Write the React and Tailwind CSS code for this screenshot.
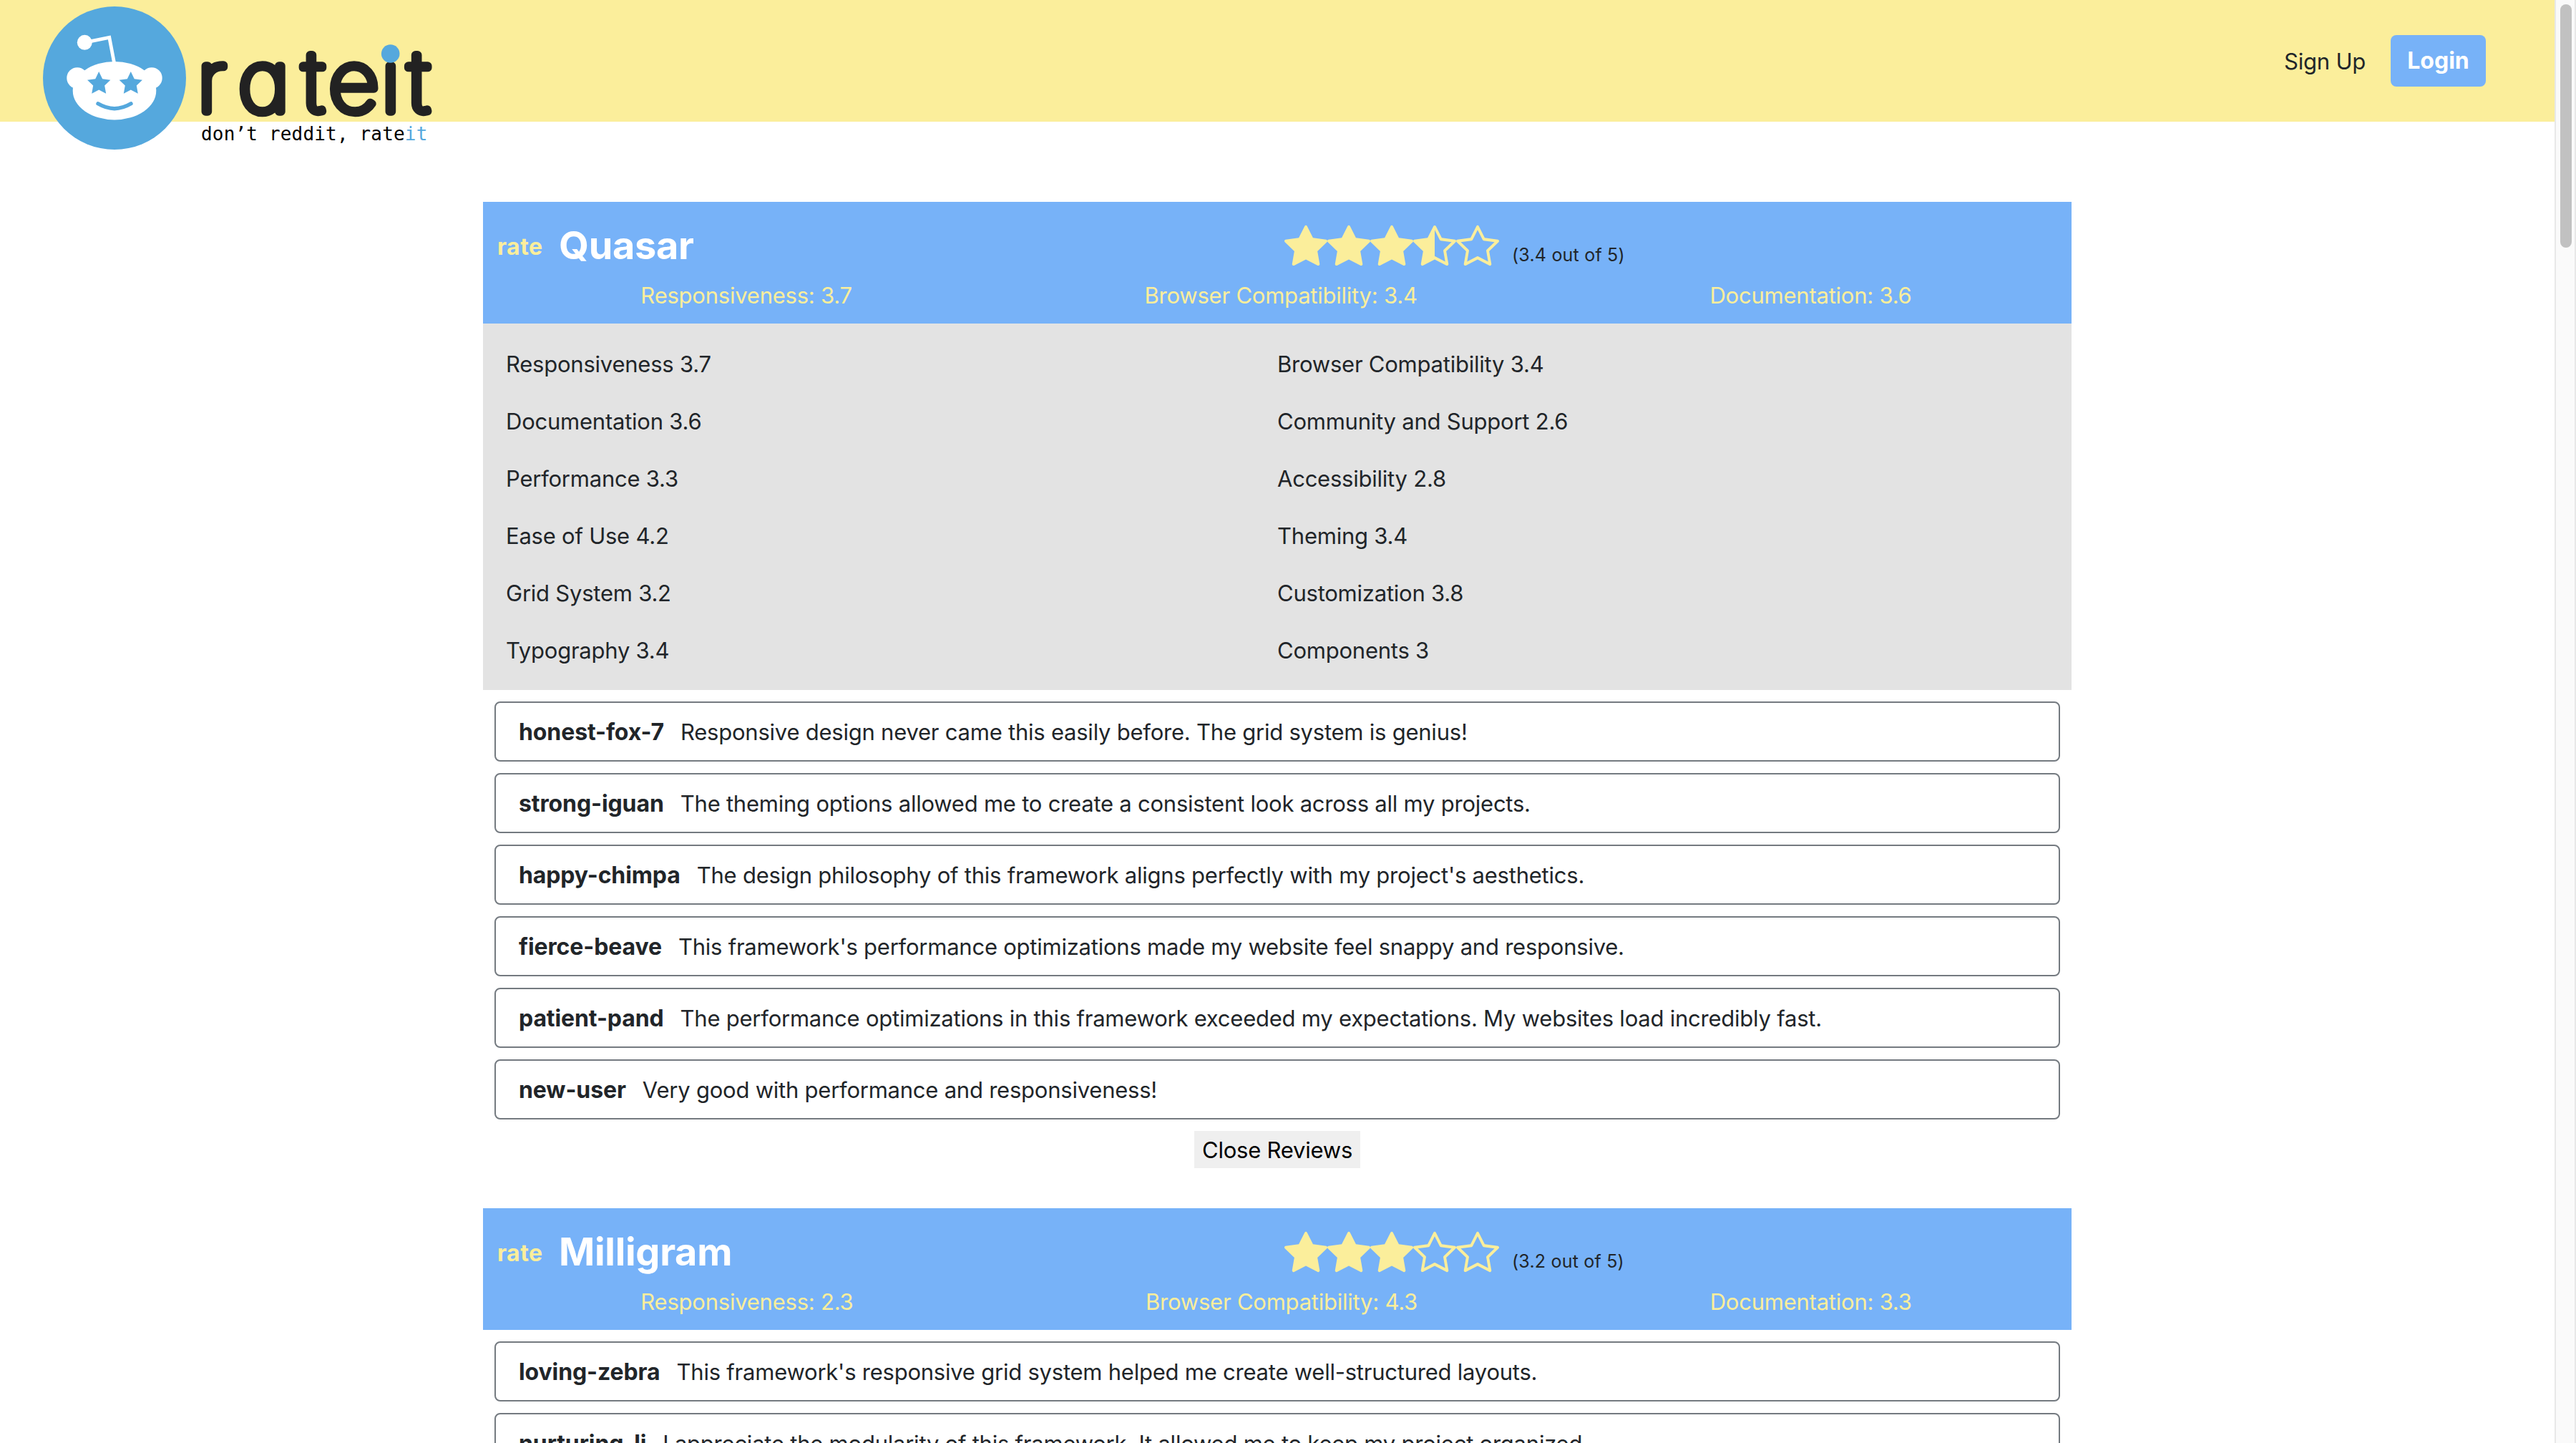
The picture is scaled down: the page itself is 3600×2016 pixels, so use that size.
import React from 'react'
import { BsStar, BsStarFill, BsStarHalf } from 'react-icons/bs'

const frameworks = [
  {
    name: 'Quasar',
    rating: '3.4',
    stars: ['full', 'full', 'full', 'half', 'empty'],
    summary: ['Responsiveness: 3.7', 'Browser Compatibility: 3.4', 'Documentation: 3.6'],
    details: [
      'Responsiveness 3.7', 'Browser Compatibility 3.4',
      'Documentation 3.6', 'Community and Support 2.6',
      'Performance 3.3', 'Accessibility 2.8',
      'Ease of Use 4.2', 'Theming 3.4',
      'Grid System 3.2', 'Customization 3.8',
      'Typography 3.4', 'Components 3',
    ],
    reviews: [
      ['honest-fox-7', 'Responsive design never came this easily before. The grid system is genius!'],
      ['strong-iguan', 'The theming options allowed me to create a consistent look across all my projects.'],
      ['happy-chimpa', "The design philosophy of this framework aligns perfectly with my project's aesthetics."],
      ['fierce-beave', "This framework's performance optimizations made my website feel snappy and responsive."],
      ['patient-pand', 'The performance optimizations in this framework exceeded my expectations. My websites load incredibly fast.'],
      ['new-user', 'Very good with performance and responsiveness!'],
    ],
  },
  {
    name: 'Milligram',
    rating: '3.2',
    stars: ['full', 'full', 'full', 'empty', 'empty'],
    summary: ['Responsiveness: 2.3', 'Browser Compatibility: 4.3', 'Documentation: 3.3'],
    details: [],
    reviews: [
      ['loving-zebra', "This framework's responsive grid system helped me create well-structured layouts."],
      ['nurturing-li', 'I appreciate the modularity of this framework. It allowed me to keep my project organized.'],
    ],
  },
]

const starIcons = { full: BsStarFill, half: BsStarHalf, empty: BsStar }

function starPoints(cx, cy) {
  return Array.from({ length: 10 }, (_, i) => {
    const r = i % 2 ? 8.4 : 17
    const a = (Math.PI / 5) * i
    return `${(cx + r * Math.sin(a)).toFixed(2)},${(cy - r * Math.cos(a)).toFixed(2)}`
  }).join(' ')
}

function Logo() {
  return (
    <svg className="h-[214px] w-[620px] shrink-0" viewBox="0 0 620 214" role="img" aria-label="rateit">
      <circle cx="160" cy="109" r="100" fill="#55a8dd" />
      <polyline points="118.3,59.3 152.8,52.3 160,90" fill="none" stroke="#fff" strokeWidth="4.8" />
      <circle cx="118.3" cy="59.3" r="10.5" fill="#fff" />
      <circle cx="108" cy="109" r="14.7" fill="#fff" />
      <circle cx="212" cy="109" r="14.7" fill="#fff" />
      <ellipse cx="160" cy="126.7" rx="58.3" ry="40.7" fill="#fff" />
      <polygon points={starPoints(138.2, 117)} fill="#55a8dd" />
      <polygon points={starPoints(182.8, 117)} fill="#55a8dd" />
      <path d="M137 144.8Q160 158.5 183 144.8" fill="none" stroke="#55a8dd" strokeWidth="5.4" strokeLinecap="round" />
      <text
        x="262.4 316.8 402.8 437.1 507.2 543.1"
        y="156"
        transform="scale(1.05 1)"
        className="font-['Inter',sans-serif] text-[118px] font-thin [font-feature-settings:'cv11']"
        fill="#222"
        stroke="#222"
        strokeWidth="11.3"
        strokeLinejoin="round"
      >
        rateit
      </text>
      <circle cx="545.7" cy="75" r="12.8" fill="#55a8dd" />
      <text x="281" y="195.5" className="font-['DejaVu_Sans_Mono',monospace] text-[26px] tracking-[0.17px]" fill="#000">
        don’t reddit, rate<tspan fill="#55a8dd">it</tspan>
      </text>
    </svg>
  )
}

function Header() {
  return (
    <header className="flex h-[170px] items-start justify-between bg-[#fbee9b] pr-24">
      <Logo />
      <nav className="mt-[49px] flex items-center gap-[35px]">
        <a className="pt-px">Sign Up</a>
        <button className="h-[72px] w-[133px] rounded-lg bg-[#77b2f8] text-[32px] font-bold tracking-normal text-white">
          Login
        </button>
      </nav>
    </header>
  )
}

function FrameworkHeader({ name, rating, stars, summary }) {
  return (
    <div className="h-[170px] bg-[#77b2f8] px-4 pt-[31px]">
      <div className="grid h-[76px] grid-cols-2">
        <div className="flex items-start pl-1 font-bold">
          <span className="w-[86px] pt-2 text-[32px] leading-[48px] tracking-[0.5px] text-[#fbee9b]">rate</span>
          <h2 className="text-[54px] leading-[60px] tracking-[-0.3px] text-white">{name}</h2>
        </div>
        <div className="flex items-start pl-[10px]">
          {stars.map((kind, i) => {
            const Icon = starIcons[kind]
            return <Icon key={i} className="size-[60px] shrink-0 text-[#fbee9b]" />
          })}
          <span className="ml-[18px] mt-7 text-[25px] leading-[30px] tracking-[0.2px]">({rating} out of 5)</span>
        </div>
      </div>
      <div className="flex justify-around pr-[3px] text-[#fbee9b]">
        {summary.map((s) => <span key={s}>{s}</span>)}
      </div>
    </div>
  )
}

function Framework({ data, open }) {
  return (
    <section>
      <FrameworkHeader {...data} />
      {data.details.length > 0 && (
        <div className="grid grid-cols-[1078px_1fr] bg-[#e3e3e3] pb-[15px] pl-8 pt-[17px]">
          {data.details.map((d) => <div key={d} className="py-4">{d}</div>)}
        </div>
      )}
      <ul className="flex flex-col gap-4 p-4">
        {data.reviews.map(([user, text]) => (
          <li key={user} className="flex h-[84px] items-center gap-[23px] rounded-lg border-2 border-[#747a80] px-8 pt-0.5">
            <strong className="text-[32px] font-bold tracking-[-0.1px]">{user}</strong>
            <span className="whitespace-nowrap">{text}</span>
          </li>
        ))}
      </ul>
      {open && (
        <div className="mb-14 flex justify-center">
          <button className="h-[52px] w-[232px] bg-[#efefef] pt-0.5 text-black">Close Reviews</button>
        </div>
      )}
    </section>
  )
}

function Scrollbar() {
  return (
    <div className="w-[30px] border-x-2 border-[#e8e8e8] bg-[#fafafa] px-1.5 pt-1.5">
      <div className="h-[340px] w-4 rounded-full bg-[#c1c1c1]" />
    </div>
  )
}

export default function App() {
  return (
    <div className="flex h-[2016px] w-[3600px] overflow-hidden bg-white font-['Inter',sans-serif] text-[31px] leading-[48px] tracking-[-0.23px] text-[#212529]">
      <div className="w-[3570px]">
        <Header />
        <main className="mx-auto mt-28 w-[2220px]">
          <Framework data={frameworks[0]} open />
          <Framework data={frameworks[1]} />
        </main>
      </div>
      <Scrollbar />
    </div>
  )
}
